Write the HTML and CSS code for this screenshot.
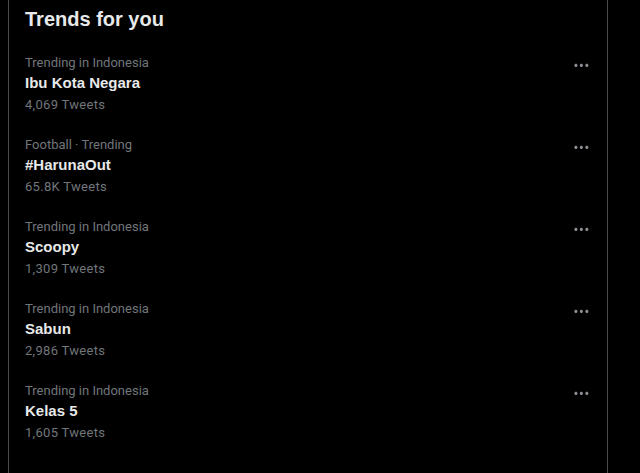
FILE: index.html
```html
<!DOCTYPE html>
<html>
<head>
<meta charset="utf-8">
<link rel="stylesheet" href="styles.css">
</head>
<body>
<div class="panel">
  <h2 class="title">Trends for you</h2>
  <div class="trend">
    <div class="info">
      <div class="meta">Trending in Indonesia</div>
      <div class="name">Ibu Kota Negara</div>
      <div class="count">4,069 Tweets</div>
    </div>
    <svg class="more" viewBox="0 0 24 24"><path d="M3 12c0-1.1.9-2 2-2s2 .9 2 2-.9 2-2 2-2-.9-2-2zm9 2c1.1 0 2-.9 2-2s-.9-2-2-2-2 .9-2 2 .9 2 2 2zm7 0c1.1 0 2-.9 2-2s-.9-2-2-2-2 .9-2 2 .9 2 2 2z"/></svg>
  </div>
  <div class="trend">
    <div class="info">
      <div class="meta">Football · Trending</div>
      <div class="name">#HarunaOut</div>
      <div class="count">65.8K Tweets</div>
    </div>
    <svg class="more" viewBox="0 0 24 24"><path d="M3 12c0-1.1.9-2 2-2s2 .9 2 2-.9 2-2 2-2-.9-2-2zm9 2c1.1 0 2-.9 2-2s-.9-2-2-2-2 .9-2 2 .9 2 2 2zm7 0c1.1 0 2-.9 2-2s-.9-2-2-2-2 .9-2 2 .9 2 2 2z"/></svg>
  </div>
  <div class="trend">
    <div class="info">
      <div class="meta">Trending in Indonesia</div>
      <div class="name">Scoopy</div>
      <div class="count">1,309 Tweets</div>
    </div>
    <svg class="more" viewBox="0 0 24 24"><path d="M3 12c0-1.1.9-2 2-2s2 .9 2 2-.9 2-2 2-2-.9-2-2zm9 2c1.1 0 2-.9 2-2s-.9-2-2-2-2 .9-2 2 .9 2 2 2zm7 0c1.1 0 2-.9 2-2s-.9-2-2-2-2 .9-2 2 .9 2 2 2z"/></svg>
  </div>
  <div class="trend">
    <div class="info">
      <div class="meta">Trending in Indonesia</div>
      <div class="name">Sabun</div>
      <div class="count">2,986 Tweets</div>
    </div>
    <svg class="more" viewBox="0 0 24 24"><path d="M3 12c0-1.1.9-2 2-2s2 .9 2 2-.9 2-2 2-2-.9-2-2zm9 2c1.1 0 2-.9 2-2s-.9-2-2-2-2 .9-2 2 .9 2 2 2zm7 0c1.1 0 2-.9 2-2s-.9-2-2-2-2 .9-2 2 .9 2 2 2z"/></svg>
  </div>
  <div class="trend">
    <div class="info">
      <div class="meta">Trending in Indonesia</div>
      <div class="name">Kelas 5</div>
      <div class="count">1,605 Tweets</div>
    </div>
    <svg class="more" viewBox="0 0 24 24"><path d="M3 12c0-1.1.9-2 2-2s2 .9 2 2-.9 2-2 2-2-.9-2-2zm9 2c1.1 0 2-.9 2-2s-.9-2-2-2-2 .9-2 2 .9 2 2 2zm7 0c1.1 0 2-.9 2-2s-.9-2-2-2-2 .9-2 2 .9 2 2 2z"/></svg>
  </div>
</div>
</body>
</html>
```
FILE: styles.css
```css
html, body {
  margin: 0;
  padding: 0;
  background: #000;
  height: 100%;
  overflow: hidden;
}
body {
  font-family: Roboto, "Liberation Sans", Arial, sans-serif;
  color: #e7e9ea;
}
.panel {
  margin-left: 8px;
  width: 598px;
  min-height: 473px;
  border-left: 1px solid #4a4d50;
  border-right: 1px solid #4a4d50;
  background: #000;
}
.title {
  margin: 0;
  padding: 7px 16px 12px;
  font-family: "Liberation Sans", Arial, sans-serif;
  font-size: 20px;
  line-height: 24px;
  font-weight: 700;
  color: #e7e9ea;
}
.trend {
  display: flex;
  justify-content: space-between;
  align-items: flex-start;
  padding: 12px 16px;
}
.info {
  display: flex;
  flex-direction: column;
}
.meta, .count {
  font-size: 13px;
  line-height: 16px;
  color: #71767b;
}
.count {
  padding-top: 4px;
  letter-spacing: 0.3px;
}
.name {
  padding-top: 2px;
  font-family: "Liberation Sans", Arial, sans-serif;
  font-size: 15px;
  line-height: 20px;
  font-weight: 700;
  color: #e7e9ea;
}
.more {
  width: 18.75px;
  height: 18.75px;
  margin-top: 1px;
  fill: #8b8f94;
}
```
